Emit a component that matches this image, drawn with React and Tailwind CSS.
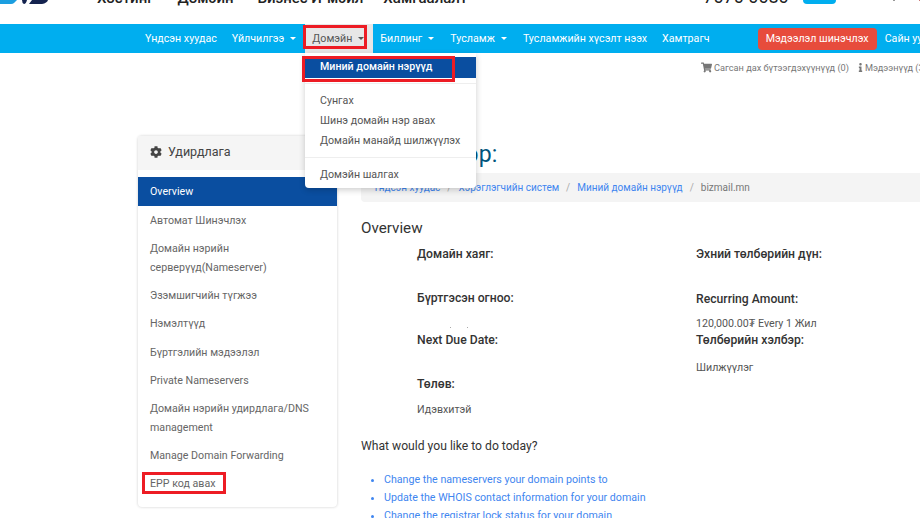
import React from 'react';
import { FaCog, FaShoppingCart, FaInfo } from 'react-icons/fa';

const navItems = [
  { label: 'Үндсэн хуудас' },
  { label: 'Үйлчилгээ', caret: true },
  { label: 'Домэйн', caret: true, active: true },
  { label: 'Биллинг', caret: true },
  { label: 'Тусламж', caret: true },
  { label: 'Тусламжийн хүсэлт нээх' },
  { label: 'Хамтрагч' },
];

const sideItems = [
  'Автомат Шинэчлэх',
  'Домайн нэрийн серверүүд(Nameserver)',
  'Эзэмшигчийн түгжээ',
  'Нэмэлтүүд',
  'Бүртгэлийн мэдээлэл',
  'Private Nameservers',
  'Домайн нэрийн удирдлага/DNS management',
  'Manage Domain Forwarding',
  'EPP код авах',
];

const links = [
  'Change the nameservers your domain points to',
  'Update the WHOIS contact information for your domain',
  'Change the registrar lock status for your domain',
];

function Caret() {
  return <span className="inline-block ml-[6px] mr-[1px] w-0 h-0 border-x-[3px] border-x-transparent border-t-[3px]" />;
}

function App() {
  return (
    <div className="relative h-[518px] w-[920px] overflow-hidden bg-white font-['Roboto',sans-serif] text-[10.67px] text-[#444]">
      {/* Top header, cut off by the screenshot */}
      <div className="h-[24px] overflow-hidden relative">
        <svg className="absolute left-0 top-0" width="50" height="5" viewBox="0 0 50 5">
          <path d="M0 0H17L14 3Q13 4 11 4H0Z" fill="#1b9ee0" />
          <path d="M22 0H27Q26 4 24 4Q22 3 22 0Z" fill="#14234f" />
          <path d="M29 4L32 0H48Q47 3 42 4Z" fill="#14234f" />
        </svg>
        <div className="flex items-start -mt-[13px] text-[#222] text-[15px] font-medium pl-[97px] gap-[24px] whitespace-nowrap">
          <span>Хостинг</span>
          <span>Домэйн</span>
          <span>Бизнес И-мэйл</span>
          <span className="-ml-[4px]">Хамгаалалт</span>
          <span className="ml-[212px] -mt-[4px] text-[18px] font-normal">7070 0080</span>
          <span className="-ml-[10px] mt-[13px] h-[4px] w-[33px] shrink-0 rounded-b-lg bg-[#00aeef]" />
          <span className="ml-[33px] mt-[13px] h-[1px] w-[2px] shrink-0 bg-[#999]" />
          <span className="mt-[13px] h-[1px] w-[2px] shrink-0 bg-[#c77]" />
        </div>
      </div>

      {/* Nav bar */}
      <nav className="h-[29px] bg-[#00aeef] flex items-center pl-[137.5px] text-white whitespace-nowrap">
        {navItems.map(item => (
          <div
            key={item.label}
            className={'h-full flex items-center px-[7.5px] ' + (item.active ? 'bg-[#e7e7e7] text-[#555]' : '')}
          >
            {item.label}
            {item.caret && <Caret />}
          </div>
        ))}
        <div className="ml-[40.5px] w-[119px] shrink-0 h-[22px] mt-[1px] flex items-center justify-center rounded bg-[#e74c3c]">Мэдээлэл шинэчлэх</div>
        <div className="ml-[8px]">Сайн уу</div>
      </nav>

      {/* Cart row */}
      <div className="flex h-[33px] items-center pl-[701px] pb-[4px] text-[9.2px] text-[#777] whitespace-nowrap">
        <FaShoppingCart className="mr-[2px] shrink-0" size={11} />
        <span>Сагсан дах бүтээгдэхүүнүүд (0)</span>
        <FaInfo className="ml-[7px] shrink-0" size={9} />
        <span>Мэдээнүүд (3)</span>
      </div>

      {/* Main */}
      <div className="flex pl-[138px] pt-[50px] items-start">
        <aside className="w-[199px] rounded shadow-[0_0_3px_rgba(0,0,0,0.2)] bg-white">
          <div className="h-[34px] bg-[#f5f5f5] flex items-center pl-[12px] pb-[2px] text-[12.5px] text-[#444]">
            <FaCog className="mr-[6px]" size={12} />
            Удирдлага
          </div>
          <div className="h-[7px]" />
          <div className="h-[29px] flex items-center pl-[12px] bg-[#0a4ea0] text-white">Overview</div>
          <ul className="text-[#666] leading-[18.5px] pt-[1px] pb-[8px]">
            {sideItems.map(item => (
              <li key={item} className="pl-[12px] pr-[24px] py-[4.9px]">{item}</li>
            ))}
          </ul>
        </aside>

        <main className="ml-[24px] flex-1 min-w-0 mt-[4px]">
          <h1 className="text-[23px] text-[#00547c] leading-[30px] whitespace-nowrap">Домэйн нэр:</h1>
          <div className="mt-[3px] h-[29px] bg-[#f4f4f4] rounded flex items-center pl-[12px] gap-[7px] text-[10px] text-[#3f86f0] -mr-[10px] whitespace-nowrap">
            <span>Үндсэн хуудас</span>
            <span className="text-[#aaa]">/</span>
            <span>Хэрэглэгчийн систем</span>
            <span className="text-[#aaa]">/</span>
            <span>Миний домайн нэрүүд</span>
            <span className="text-[#aaa]">/</span>
            <span className="text-[#777]">bizmail.mn</span>
          </div>
          <h2 className="mt-[16px] text-[15.2px] text-[#333] leading-[20px]">Overview</h2>
          <div className="mt-[7px] grid grid-cols-[279px_1fr] pl-[56px] text-[12.2px] text-[#333] whitespace-nowrap">
            <div>
              <div className="h-[44px] font-medium">Домайн хаяг:</div>
              <div className="h-[42px] font-medium">Бүртгэсэн огноо:</div>
              <div className="h-[44px] font-medium">Next Due Date:</div>
              <div className="h-[27px] font-medium">Төлөв:</div>
              <div className="text-[10.67px] text-[#555]">Идэвхитэй</div>
            </div>
            <div>
              <div className="h-[45px] font-medium">Эхний төлбөрийн дүн:</div>
              <div className="h-[26px] font-medium">Recurring Amount:</div>
              <div className="h-[15px] text-[10.67px] text-[#555]">120,000.00₮ Every 1 Жил</div>
              <div className="h-[29px] font-medium">Төлбөрийн хэлбэр:</div>
              <div className="text-[10.67px] text-[#555]">Шилжүүлэг</div>
            </div>
          </div>
          <p className="mt-[19px] text-[12.15px] text-[#333]">What would you like to do today?</p>
          <ul className="mt-[16px] pl-[23px] list-disc text-[#3f86f0] leading-[18px]">
            {links.map(link => <li key={link}>{link}</li>)}
          </ul>
        </main>
      </div>

      {/* Open dropdown */}
      <div className="absolute left-[305px] top-[53px] w-[171px] h-[135px] pt-[4px] bg-white rounded-b shadow-[0_2px_6px_rgba(0,0,0,0.2)] text-[#555]">
        <div className="h-[21px] pl-[15px] pb-[2px] flex items-center bg-[#0a4ea0] text-white font-medium">Миний домайн нэрүүд</div>
        <div className="mt-[5px] border-t border-[#eee]" />
        <div className="mt-[7px] pl-[15px] leading-[20px]">
          <div>Сунгах</div>
          <div>Шинэ домайн нэр авах</div>
          <div>Домайн манайд шилжүүлэх</div>
        </div>
        <div className="mt-[6px] border-t border-[#eee]" />
        <div className="mt-[7px] pl-[15px] leading-[20px]">Домэйн шалгах</div>
      </div>

      {/* Specks left from the blurred date */}
      <span className="absolute left-[450px] top-[327px] w-[1px] h-[1px] bg-[#aaa]" />
      <span className="absolute left-[467px] top-[327px] w-[1px] h-[1px] bg-[#aaa]" />

      {/* Red annotation boxes */}
      <div className="absolute left-[303px] top-[25px] w-[64px] h-[24px] border-[3px] border-[#ed1c24]" />
      <div className="absolute left-[302px] top-[56px] w-[153px] h-[26px] border-[3px] border-[#ed1c24]" />
      <div className="absolute left-[142px] top-[472px] w-[84px] h-[22px] border-[3px] border-[#ed1c24]" />
    </div>
  );
}

export default App;
